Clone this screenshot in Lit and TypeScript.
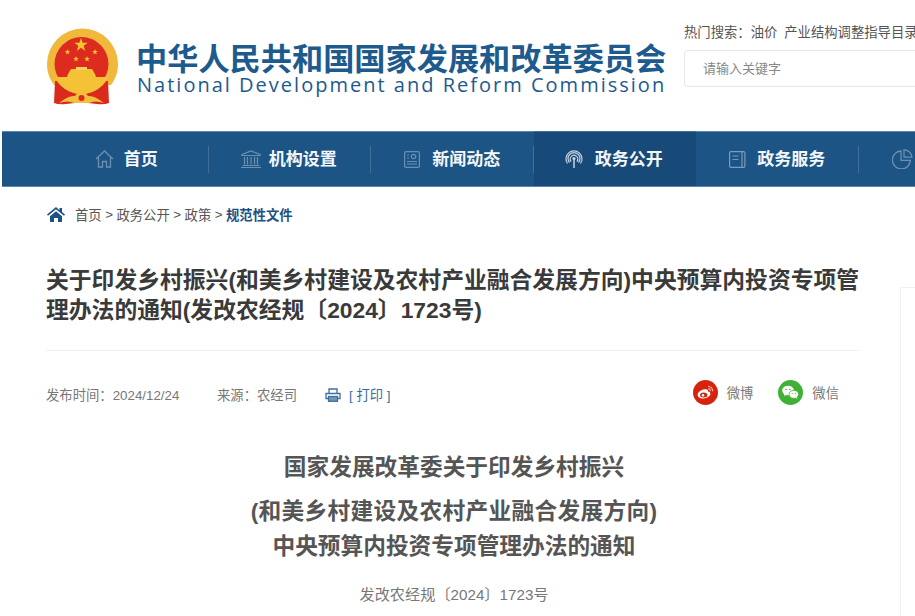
import { LitElement, html, css, svg } from "lit";
import { customElement } from "lit/decorators.js";

const star = (cx: number, cy: number, r: number, rot = 0) => {
  const pts: string[] = [];
  for (let i = 0; i < 10; i++) {
    const rr = i % 2 === 0 ? r : r * 0.4;
    const a = (-90 + i * 36 + rot) * Math.PI / 180;
    pts.push(`${(cx + rr * Math.cos(a)).toFixed(2)},${(cy + rr * Math.sin(a)).toFixed(2)}`);
  }
  return svg`<polygon points=${pts.join(" ")} fill="#f6c62e"/>`;
};

const emblem = html`<svg class="emblem" width="74" height="78" viewBox="0 0 74 78">
  <path d="M2 36a35.500 35.500 0 0 1 71 0c0 8-2.500 15-7 21H9c-4.500-6-7-13-7-21z" fill="#f0b93a"/>
  <path d="M10 53 L9 75 Q14 77 21 76 L30 75 H43 L52 76 Q59 77 64 75 L63 53 Z" fill="#d92a1c"/>
  <circle cx="36.500" cy="36" r="30" fill="#f0b93a"/>
  <circle cx="36.500" cy="36" r="27" fill="#dd2c1f"/>
  ${star(36, 17, 7)}${star(22.500, 24, 3)}${star(50, 24, 3)}${star(31, 31, 3)}${star(42, 31, 3)}
  <path d="M26 41h21l3 5 1 3H22l1-3z" fill="#f4c236"/>
  <path d="M31 39h11v3H31z" fill="#f8d15a"/>
  <path d="M10.500 49H62.500C59 58 48 66 36.500 66S14 58 10.500 49z" fill="#f4c236"/>
  <path d="M14 75 Q24 67 30 68 Q33 64 36.500 64 Q40 64 43 68 Q49 67 59 75 Q50 72 44 75 H29 Q23 72 14 75Z" fill="#f2bf3e"/>
  <circle cx="36.500" cy="70" r="3" fill="#dd2c1f"/>
</svg>`;

const homeOutline = html`<svg width="19" height="18" viewBox="0 0 19 18" fill="none" stroke="#6d90b0" stroke-width="1.3"><path d="M1 9 9.500 1 18 9M3.500 7.500V17H7.500V11.500H11.500V17H15.500V7.500"/></svg>`;
const bank = html`<svg width="20" height="18" viewBox="0 0 20 18" fill="none" stroke="#6d90b0" stroke-width="1.2"><path d="M1 4.500 10 1l9 3.500v1H1zM3.500 7v7.500M6.500 7v7.500M10 7v7.500M13.500 7v7.500M16.500 7v7.500M1.500 15.500h17M0 17.500h20"/></svg>`;
const news = html`<svg width="16" height="17" viewBox="0 0 16 17" fill="none" stroke="#6d90b0" stroke-width="1.2"><rect x=".6" y=".6" width="14.800" height="15.800" rx="1.500"/><circle cx="9.500" cy="5.500" r="2.200"/><path d="M3 4h2M3 7h2M3 10.500h10M3 13h10"/></svg>`;
const signal = html`<svg width="18" height="18" viewBox="0 0 18 18" fill="none" stroke="#c4d2de" stroke-width="1.2"><path d="M9 8v10" stroke-width="1.500"/><path d="M2.500 13.500a8 8 0 1 1 13 0M4.500 12.500a6 6 0 1 1 9 0M6.200 11.500a3.700 3.700 0 1 1 5.600 0"/><circle cx="9" cy="8.500" r="1.600" fill="#c4d2de" stroke="none"/></svg>`;
const book = html`<svg width="17" height="17" viewBox="0 0 17 17" fill="none" stroke="#7b9cba" stroke-width="1.2"><path d="M2 .6h12.500a1.400 1.400 0 0 1 1.400 1.400v13a1.400 1.400 0 0 1-1.400 1.400H2A1.400 1.400 0 0 1 .6 15V2A1.400 1.400 0 0 1 2 .6zM13 .6v15.800M3.500 5h6M3.500 8.500h6"/></svg>`;
const pie = html`<svg width="21" height="20" viewBox="0 0 21 20" fill="none" stroke="#6d90b0" stroke-width="1.3"><path d="M9 2a9 9 0 1 0 9.400 9.300H9z"/><path d="M12 .8v7.400h8A8 8 0 0 0 12 .8z"/></svg>`;
const crumbHome = html`<svg width="18" height="15" viewBox="0 0 18 15"><path d="M9 0 0 7.600l1 1.200L9 2.200l8 6.600 1-1.200-3-2.500V1h-2.500v2.200zM3 9.200V15h4v-4h4v4h4V9.200L9 4.200z" fill="#1c5283"/></svg>`;
const printer = html`<svg width="16" height="14" viewBox="0 0 16 14" fill="none" stroke="#3f7099" stroke-width="1.300"><path d="M4 5V1h8v4M3.500 10.500H1V5.500h14v5h-2.500"/><rect x="3.500" y="8.500" width="9" height="4.800" fill="#6f97b8" stroke="#3f7099"/></svg>`;
const weibo = html`<svg width="25" height="25" viewBox="0 0 25 25"><circle cx="12.500" cy="12.500" r="12.500" fill="#d7230e"/><path d="M10.600 9.600c3.500-1.300 5 .5 4.500 2 2.400.6 2.800 2.200 1.900 3.700-1.200 2-4 3.200-6.700 3.200-3 0-5.600-1.400-5.600-3.600 0-2.200 2.700-4.600 5.900-5.300z" fill="#fff"/><ellipse cx="10.700" cy="15" rx="3.700" ry="2.500" fill="#d7230e"/><circle cx="10" cy="15.200" r="1.200" fill="#fff"/><path d="M15 6.300a4.700 4.700 0 0 1 4.700 5M15.200 8.600a2.400 2.400 0 0 1 2.200 2.600" fill="none" stroke="#f5b7ac" stroke-width="1.100"/></svg>`;
const wechat = html`<svg width="25" height="25" viewBox="0 0 25 25"><circle cx="12.500" cy="12.500" r="12.500" fill="#3fb235"/><ellipse cx="10" cy="10.500" rx="5.800" ry="4.800" fill="#fff"/><path d="M6.500 13.500 6 16l3-1.500z" fill="#fff"/><ellipse cx="15.800" cy="14.300" rx="4.800" ry="4" fill="#fff" stroke="#3fb235" stroke-width=".8"/><path d="M18 17.500l1.200 1.700-.2-2.500z" fill="#fff"/><circle cx="8" cy="9.500" r=".8" fill="#3fb235"/><circle cx="11.800" cy="9.500" r=".8" fill="#3fb235"/><circle cx="14.200" cy="13.500" r=".6" fill="#3fb235"/><circle cx="17.400" cy="13.500" r=".6" fill="#3fb235"/></svg>`;

const navItems = [
  { icon: homeOutline, label: "首页", gap: 10, pad: 2 },
  { icon: bank, label: "机构设置", gap: 8, pad: 2 },
  { icon: news, label: "新闻动态", gap: 12, pad: 0 },
  { icon: signal, label: "政务公开", gap: 12, pad: 2, active: true },
  { icon: book, label: "政务服务", gap: 11, pad: 0 },
];

@customElement("app-root")
export class AppRoot extends LitElement {
  static styles = css`
    :host {
      display: block;
      width: 915px;
      height: 616px;
      overflow: hidden;
      background: #fff;
      font-family: "Liberation Sans", "Noto Sans CJK SC", sans-serif;
      color: #333;
    }
    .top {
      height: 131px;
      display: flex;
      padding-left: 45px;
      box-sizing: border-box;
      overflow: hidden;
    }
    .emblem { margin-top: 28px; flex: none; filter: blur(.4px); }
    .brand { margin-left: 17px; width: 530px; flex: none; padding-top: 41px; color: #1d5a8e; }
    .cn {
      font-family: "Noto Sans CJK SC", sans-serif;
      font-size: 31.200px; font-weight: 700; line-height: 32px; white-space: nowrap;
    }
    .en {
      font-family: "Open Sans", sans-serif;
      font-size: 20px; line-height: 24px; letter-spacing: 2.010px; white-space: nowrap; margin-left: 1px;
    }
    .search { margin-left: 18px; padding-top: 24px; flex: none; width: 300px; }
    .hot { font-size: 13.330px; line-height: 17px; color: #555; white-space: nowrap; }
    .hot span { margin-right: 7px; }
    .box {
      margin-top: 9px; height: 37px; box-sizing: border-box; border: 1px solid #e6e6e6; border-radius: 4px;
      padding-left: 18px; font-size: 13px; line-height: 35px; color: #888;
    }
    nav {
      margin-left: 2px; height: 56px; background: #1c5585; display: flex; align-items: center; padding-left: 44px;
      box-shadow: inset 0 1px 0 #5d87aa, inset 0 -1px 0 #5d87aa; overflow: hidden;
    }
    .item {
      flex: none; width: 162.500px; height: 56px; display: flex; align-items: center; justify-content: center;
      color: #f4f7fa; font-size: 17px; font-weight: 700; font-family: "Noto Sans CJK SC", sans-serif; white-space: nowrap;
      box-sizing: border-box;
    }
    .item svg { flex: none; }
    .item span { padding-bottom: 3px; }
    .item.last { justify-content: flex-start; padding-left: 33px; }
    .sep { flex: none; width: 1px; height: 27px; background: rgba(255,255,255,.16); margin-left: -1px; }
    .item.active { background: #174a78; box-shadow: inset 0 -1px 0 #5d87aa, inset 0 1px 0 #3f6f98; }
    .crumb {
      display: flex; align-items: center; padding: 20px 0 0 47px; height: 15px; font-size: 13.330px; color: #555; white-space: nowrap;
    }
    .crumb svg { margin-right: 10px; }
    .crumb i { font-style: normal; margin: 0 3.500px; }
    .crumb b { color: #1c5283; font-weight: 700; font-family: "Noto Sans CJK SC", sans-serif; }
    .layout { display: flex; gap: 40px; padding-left: 46px; }
    article { width: 814px; flex: none; }
    h1 {
      margin: 43px 0 0; font-size: 22.800px; line-height: 30px; font-weight: 700; color: #3a3a3a;
      padding-bottom: 25px; border-bottom: 1px solid #f0f0f0;
    }
    .meta { display: flex; align-items: center; height: 25px; margin-top: 31px; font-size: 13.330px; color: #777; white-space: nowrap; }
    .time { width: 171px; }
    .src { width: 108px; }
    .print { display: flex; align-items: center; gap: 8px; color: #3a6d98; }
    .share { margin-left: auto; margin-right: 21px; margin-bottom: 5px; display: flex; align-items: center; gap: 9px; }
    .share span { margin-right: 16px; }
    .share span:last-child { margin-right: 0; }
    .side { width: 40px; height: 400px; flex: none; margin-top: 65px; border: 1px solid #f0f0f0; border-right: none; }
    .body { text-align: center; color: #555; font-weight: 700; font-size: 22.700px; width: 816px; }
    .body p { margin: 0; }
    .l1 { margin-top: 38px !important; line-height: 44px; }
    .l2 { line-height: 44px; letter-spacing: .3px; }
    .l3 { line-height: 26px; }
    .no { margin-top: 24px !important; font-size: 15.200px; font-weight: 400; color: #777; line-height: 24px; }
  `;

  render() {
    return html`
      <div class="top">
        ${emblem}
        <div class="brand">
          <div class="cn">中华人民共和国国家发展和改革委员会</div>
          <div class="en">National Development and Reform Commission</div>
        </div>
        <div class="search">
          <div class="hot"><span>热门搜索\uFF1A油价</span>产业结构调整指导目录</div>
          <div class="box">请输入关键字</div>
        </div>
      </div>
      <nav>
        ${navItems.map((n) => html`
          <div class="item ${n.active ? "active" : ""}" style="gap:${n.gap}px;padding-right:${n.pad}px">${n.icon}<span>${n.label}</span></div>
          ${!n.active ? html`<div class="sep"></div>` : ""}
        `)}
        <div class="item last">${pie}</div>
      </nav>
      <div class="crumb">${crumbHome}首页<i>&gt;</i>政务公开<i>&gt;</i>政策<i>&gt;</i><b>规范性文件</b></div>
      <div class="layout">
        <article>
          <h1>关于印发乡村振兴(和美乡村建设及农村产业融合发展方向)中央预算内投资专项管理办法的通知(发改农经规〔2024〕1723号)</h1>
          <div class="meta">
            <div class="time">发布时间\uFF1A2024/12/24</div>
            <div class="src">来源\uFF1A农经司</div>
            <div class="print">${printer}<span>[ 打印 ]</span></div>
            <div class="share">${weibo}<span>微博</span>${wechat}<span>微信</span></div>
          </div>
          <div class="body">
            <p class="l1">国家发展改革委关于印发乡村振兴</p>
            <p class="l2">(和美乡村建设及农村产业融合发展方向)</p>
            <p class="l3">中央预算内投资专项管理办法的通知</p>
            <p class="no">发改农经规〔2024〕1723号</p>
          </div>
        </article>
        <div class="side"></div>
      </div>
    `;
  }
}
